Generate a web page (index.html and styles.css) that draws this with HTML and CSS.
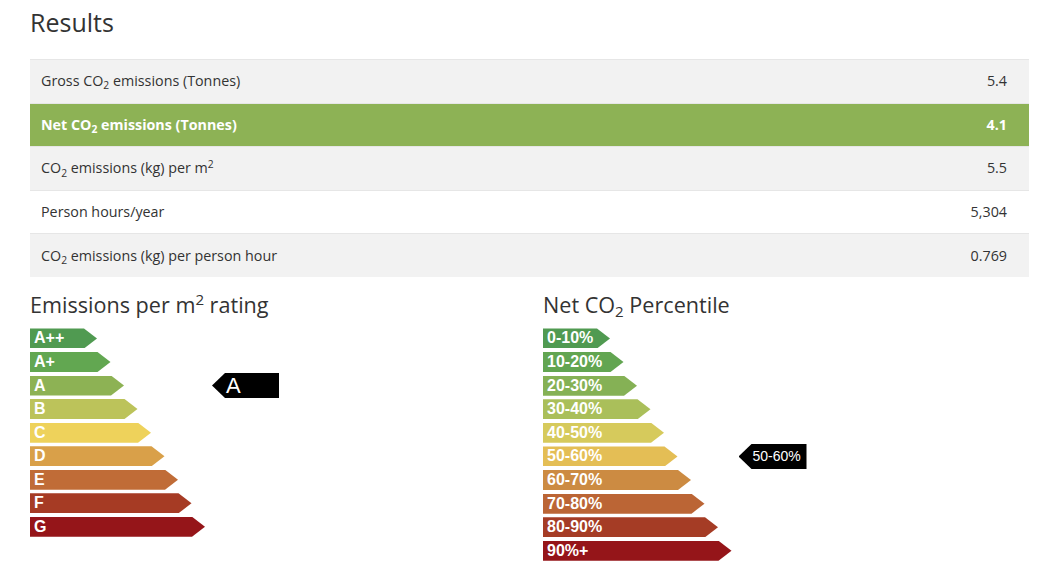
FILE: index.html
```html
<!DOCTYPE html>
<html lang="en">
<head>
<meta charset="utf-8">
<title>Results</title>
<link rel="stylesheet" href="styles.css">
</head>
<body>
<div class="page">
  <h1 class="title">Results</h1>
  <table class="results">
    <tbody>
      <tr class="odd"><td>Gross CO<sub>2</sub> emissions (Tonnes)</td><td class="num">5.4</td></tr>
      <tr class="hl"><td>Net CO<sub>2</sub> emissions (Tonnes)</td><td class="num">4.1</td></tr>
      <tr class="odd"><td>CO<sub>2</sub> emissions (kg) per m<sup>2</sup></td><td class="num">5.5</td></tr>
      <tr class="even"><td>Person hours/year</td><td class="num">5,304</td></tr>
      <tr class="odd"><td>CO<sub>2</sub> emissions (kg) per person hour</td><td class="num">0.769</td></tr>
    </tbody>
  </table>

  <div class="charts">
    <section class="chart">
      <h2 class="chart-title">Emissions per m<sup>2</sup> rating</h2>
      <div class="scale">
        <ul class="bars">
          <li class="bar c-app" style="width:67px">A++</li>
          <li class="bar c-ap" style="width:80.5px">A+</li>
          <li class="bar c-a" style="width:94px">A</li>
          <li class="bar c-b" style="width:107.5px">B</li>
          <li class="bar c-c" style="width:121px">C</li>
          <li class="bar c-d" style="width:134.5px">D</li>
          <li class="bar c-e" style="width:148px">E</li>
          <li class="bar c-f" style="width:161.5px">F</li>
          <li class="bar c-g" style="width:175px">G</li>
        </ul>
        <div class="marker-col">
          <div class="marker marker-big" style="margin-top:44.6px">A</div>
        </div>
      </div>
    </section>

    <section class="chart">
      <h2 class="chart-title">Net CO<sub>2</sub> Percentile</h2>
      <div class="scale">
        <ul class="bars bars-pct">
          <li class="bar p0" style="width:67px">0-10%</li>
          <li class="bar p1" style="width:80.5px">10-20%</li>
          <li class="bar p2" style="width:94px">20-30%</li>
          <li class="bar p3" style="width:107.5px">30-40%</li>
          <li class="bar p4" style="width:121px">40-50%</li>
          <li class="bar p5" style="width:134.5px">50-60%</li>
          <li class="bar p6" style="width:148px">60-70%</li>
          <li class="bar p7" style="width:161.5px">70-80%</li>
          <li class="bar p8" style="width:175px">80-90%</li>
          <li class="bar p9" style="width:188.5px">90%+</li>
        </ul>
        <div class="marker-col">
          <div class="marker marker-small" style="margin-top:115.5px">50-60%</div>
        </div>
      </div>
    </section>
  </div>
</div>
</body>
</html>
```

FILE: styles.css
```css
* { box-sizing: border-box; }

html, body {
  margin: 0;
  padding: 0;
  background: #ffffff;
}

body {
  font-family: "Open Sans", "Liberation Sans", Arial, sans-serif;
  color: #333333;
}

.page {
  padding: 0 24px 0 30px;
}

.title {
  margin: 0;
  padding-top: 4px;
  font-size: 25px;
  font-weight: 400;
  line-height: 36px;
  color: #333333;
}

.results {
  width: 100%;
  margin-top: 19px;
  border-collapse: collapse;
  font-size: 14.3px;
}

.results tr {
  height: 43.6px;
}

.results td {
  padding: 0 22px 0 11px;
  border-top: 1px solid #e6e6e6;
  vertical-align: middle;
  line-height: 20px;
}

.results td.num {
  text-align: right;
}

.results tr.odd { background: #f2f2f2; }
.results tr.even { background: #ffffff; }
.results tr.hl {
  background: #8db255;
  color: #ffffff;
  font-weight: 700;
}

sub, sup {
  font-size: 72%;
  line-height: 0;
  position: relative;
  vertical-align: baseline;
}
sub { bottom: -0.3em; }
sup { top: -0.5em; }

.charts {
  display: grid;
  grid-template-columns: 513px 1fr;
}

.chart-title {
  margin: 0;
  padding-top: 13px;
  font-size: 21.6px;
  font-weight: 400;
  line-height: 30px;
  color: #333333;
}

.chart-title sub { font-size: 70%; bottom: -0.25em; }
.chart-title sup { font-size: 70%; top: -0.55em; }

.scale {
  display: flex;
  align-items: flex-start;
  margin-top: 8px;
}

.bars {
  list-style: none;
  margin: 0;
  padding: 0;
  display: flex;
  flex-direction: column;
  gap: 3.55px;
}

.bar {
  height: 20px;
  padding-left: 4px;
  font-family: "Liberation Sans", Arial, sans-serif;
  font-weight: 700;
  font-size: 16px;
  line-height: 20px;
  color: #ffffff;
  white-space: nowrap;
  clip-path: polygon(0 0, calc(100% - 13px) 0, 100% 50%, calc(100% - 13px) 100%, 0 100%);
}

.bars-pct { gap: 3.6px; }

.c-app { background: #509a51; }
.c-ap  { background: #62a751; }
.c-a   { background: #8db254; }
.c-b   { background: #bcc35a; }
.c-c   { background: #eed25b; }
.c-d   { background: #d9a049; }
.c-e   { background: #c06c37; }
.c-f   { background: #a63b24; }
.c-g   { background: #951519; }

.p0 { background: #509a51; }
.p1 { background: #62a551; }
.p2 { background: #85b155; }
.p3 { background: #aabf5a; }
.p4 { background: #d6ca5c; }
.p5 { background: #e4be55; }
.p6 { background: #cc8b42; }
.p7 { background: #bb6535; }
.p8 { background: #a53c25; }
.p9 { background: #951519; }

.marker-col {
  margin-left: 7px;
}

.marker {
  height: 25px;
  width: 67px;
  background: #000000;
  color: #ffffff;
  font-family: "Liberation Sans", Arial, sans-serif;
  clip-path: polygon(13px 0, 100% 0, 100% 100%, 13px 100%, 0 50%);
  white-space: nowrap;
}

.marker-big {
  padding-left: 14px;
  font-size: 22px;
  line-height: 25px;
}

.marker-small {
  width: 68px;
  padding-left: 14px;
  font-size: 14px;
  line-height: 25px;
}
```
